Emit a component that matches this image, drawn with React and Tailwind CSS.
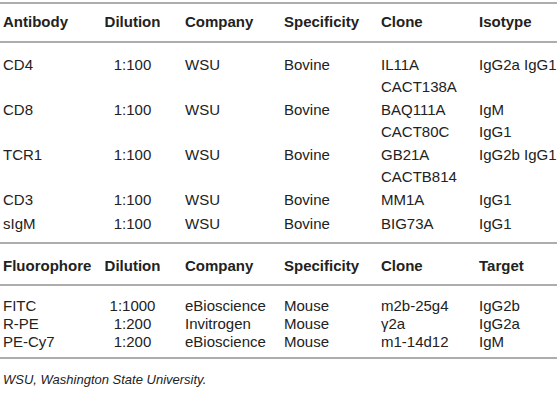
import React from "react";

const top = [
  { pad: "pt-[11px] pb-[1px]", c: ["CD4", "1:100", "WSU", "Bovine", ["IL11A", "CACT138A"], ["IgG2a IgG1"]] },
  { pad: "pt-0 pb-[1px]", c: ["CD8", "1:100", "WSU", "Bovine", ["BAQ111A", "CACT80C"], ["IgM", "IgG1"]] },
  { pad: "pt-0 pb-0", c: ["TCR1", "1:100", "WSU", "Bovine", ["GB21A", "CACTB814"], ["IgG2b IgG1"]] },
  { pad: "pt-[1px] pb-[1px]", c: ["CD3", "1:100", "WSU", "Bovine", ["MM1A"], ["IgG1"]] },
  { pad: "pt-[1px] pb-[7px]", c: ["sIgM", "1:100", "WSU", "Bovine", ["BIG73A"], ["IgG1"]] },
];

const bottom = [
  ["FITC", "1:1000", "eBioscience", "Mouse", "m2b-25g4", "IgG2b"],
  ["R-PE", "1:200", "Invitrogen", "Mouse", "γ2a", "IgG2a"],
  ["PE-Cy7", "1:200", "eBioscience", "Mouse", "m1-14d12", "IgM"],
];

const cols = "grid grid-cols-[100px_85px_99px_97px_98px_1fr]";

function Line() {
  return <div className="h-[2px] bg-[#adadad]" />;
}

function Cells({ cells }) {
  return cells.map((v, i) => (
    <div
      key={i}
      className={
        "whitespace-nowrap " +
        (i === 0 ? "pl-[3px]" : i === 1 ? "pr-[20px] text-center" : "")
      }
    >
      {Array.isArray(v) ? v.map((l) => <div key={l}>{l}</div>) : v}
    </div>
  ));
}

export default function App() {
  return (
    <div
      className="w-[557px] h-[403px] bg-white text-[#222] text-[15px] overflow-hidden"
      style={{ fontFamily: '"Liberation Sans", Arial, sans-serif' }}
    >
      <div className="mt-[2px]">
        <Line />
        <div className={cols + " font-bold leading-[22px] pt-[7px] pb-[8px]"}>
          <Cells cells={["Antibody", "Dilution", "Company", "Specificity", "Clone", "Isotype"]} />
        </div>
        <Line />
        {top.map((r) => (
          <div key={r.c[0]} className={cols + " leading-[22px] " + r.pad}>
            <Cells cells={r.c} />
          </div>
        ))}
        <Line />
        <div className={cols + " font-bold leading-[22px] pt-[11px] pb-[7px]"}>
          <Cells cells={["Fluorophore", "Dilution", "Company", "Specificity", "Clone", "Target"]} />
        </div>
        <Line />
        <div className="leading-[18px] pt-[11px] pb-[6px]">
          {bottom.map((r) => (
            <div key={r[0]} className={cols}>
              <Cells cells={r} />
            </div>
          ))}
        </div>
        <Line />
        <p className="pl-[3px] pt-[12px] text-[13px] leading-[18px] italic">
          WSU, Washington State University.
        </p>
      </div>
    </div>
  );
}
